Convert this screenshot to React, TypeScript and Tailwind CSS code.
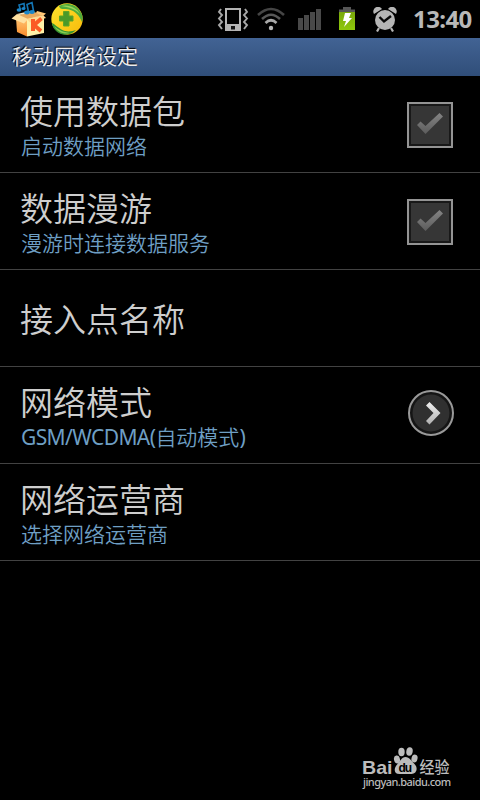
import type { ReactNode } from "react"

type Setting = {
  title: string
  summary?: ReactNode
  control?: "checkbox" | "more"
}

const SETTINGS: Setting[] = [
  { title: "使用数据包", summary: "启动数据网络", control: "checkbox" },
  { title: "数据漫游", summary: "漫游时连接数据服务", control: "checkbox" },
  { title: "接入点名称" },
  {
    title: "网络模式",
    summary: (
      <>
        <span className="font-normal tracking-[-0.6px]">GSM/WCDMA(</span>自动模式
        <span className="font-normal">)</span>
      </>
    ),
    control: "more",
  },
  { title: "网络运营商", summary: "选择网络运营商" },
]

function MusicBoxIcon() {
  return (
    <svg width="38" height="38" viewBox="0 0 38 38" className="shrink-0">
      <defs>
        <linearGradient id="box" x1="0" y1="0" x2="0" y2="1">
          <stop offset="0" stopColor="#ffc573" />
          <stop offset="1" stopColor="#f98b2a" />
        </linearGradient>
      </defs>
      <path d="M7 15 24 12 34 15 17 20Z" fill="#e8a85c" />
      <path d="M6 18 17 20V36.500L7 32Z" fill="url(#box)" />
      <path d="M17 19 34 16V33L17 36.500Z" fill="#fff1a8" />
      <path d="M1.500 18.500 7 14 18 19 14 23.500Z" fill="#ffe0a0" />
      <path d="M7 14 20 11 21 12.500 9 15Z" fill="#ffe9bd" />
      <path d="M17 19 33 15 36 18 20 22.500Z" fill="#ffd892" />
      <path d="M27 11 36 13.500 33 16 26 13Z" fill="#ffc676" />
      <path d="M23 19V31M31.500 18.500 24 25 31 31" stroke="#fb5b25" strokeWidth="4" fill="none" />
      <path
        d="M10.500 10 9 5 14 3.500 14.500 8M18.500 12 17 4.500 22 2.500 23.500 11"
        stroke="#1476b5"
        strokeWidth="1.600"
        fill="none"
      />
      <ellipse cx="9" cy="10" rx="2.400" ry="1.800" fill="#1a85c8" />
      <ellipse cx="13.500" cy="8.500" rx="2" ry="1.600" fill="#1a85c8" />
      <ellipse cx="17" cy="12.500" rx="2.800" ry="1.900" fill="#1a85c8" />
      <ellipse cx="22" cy="12" rx="2.800" ry="1.900" fill="#1a85c8" />
    </svg>
  )
}

function SafeIcon() {
  return (
    <svg width="32" height="32" viewBox="0 0 32 32" className="shrink-0">
      <defs>
        <linearGradient id="safe" x1="0" y1="0" x2="1" y2="1">
          <stop offset="0" stopColor="#ffe52e" />
          <stop offset="1" stopColor="#f7b90a" />
        </linearGradient>
      </defs>
      <circle cx="16" cy="16" r="15.700" fill="url(#safe)" />
      <path d="M8 3C15-1 25 1 29 8C32 12 32 16 31 19C28 12 24 8 18 6.500C13 6 9 7 8 3Z" fill="#4faa3b" />
      <path d="M10 3C18 1 26 5 29 11C24 6 18 4 10 3Z" fill="#9bd65a" />
      <path d="M1 20C5 22 8 26 14 28C18 29 22 28 25 27C20 33 10 33 5 28C3 26 1 23 1 20Z" fill="#349332" />
      <path d="M3 23C8 27 12 29 19 30C13 32 6 29 3 23Z" fill="#8acb50" />
      <path d="M12.500 8.500H18V13H22V18H18V23H12.500V18H8.500V13H12.500Z" fill="#4a9929" stroke="#5fa524" />
    </svg>
  )
}

function VibrateIcon() {
  return (
    <svg width="32" height="26" viewBox="0 0 32 26" className="relative -left-px shrink-0">
      <path d="M8 2H24V25H8Z" fill="#b4b4b4" />
      <path d="M10 4H22V18H10Z" fill="#000" />
      <path d="M14 20H18V23.500H14Z" fill="#111" />
      <path
        d="M4 3 2 6 5 9 2 12.500 5 16 2 19 5 23M28 3 30 6 27 9 30 12.500 27 16 30 19 27 23"
        stroke="#a8a8a8"
        strokeWidth="1.900"
        fill="none"
      />
    </svg>
  )
}

function WifiIcon() {
  return (
    <svg width="28" height="24" viewBox="0 0 28 24" className="shrink-0">
      <path d="M1 8Q14-4 27 8" stroke="#454545" strokeWidth="2.600" fill="none" />
      <path d="M5 12Q14 3.500 23 12" stroke="#585858" strokeWidth="2.600" fill="none" />
      <path d="M8.500 16Q14 10.500 19.500 16" stroke="#a8a8a8" strokeWidth="2.600" fill="none" />
      <circle cx="14" cy="21" r="2.200" fill="#b8b8b8" />
    </svg>
  )
}

function SignalIcon() {
  return (
    <svg width="24" height="22" viewBox="0 0 24 22" className="shrink-0" fill="#494949">
      <path d="M0 10H5V22H0ZM6 7H11V22H6ZM12 4H17V22H12ZM18 1H23V22H18Z" />
    </svg>
  )
}

function BatteryIcon() {
  return (
    <svg width="18" height="24" viewBox="0 0 18 24" className="shrink-0">
      <defs>
        <linearGradient id="battery" x1="0" y1="0" x2="0" y2="1">
          <stop offset="0" stopColor="#79a80b" />
          <stop offset="1" stopColor="#8fc80c" />
        </linearGradient>
      </defs>
      <path d="M5 0H13V2.500H17V6H1V2.500H5Z" fill="#565656" />
      <path d="M1 5H17V23H1Z" fill="url(#battery)" />
      <path d="M7 6H13L11 11H14L6 20 8 14H5Z" fill="#fff" />
    </svg>
  )
}

function AlarmIcon() {
  return (
    <svg width="24" height="25" viewBox="0 0 24 25" className="shrink-0">
      <path d="M1 7A4.600 4.600 0 0 1 9 2ZM23 7A4.600 4.600 0 0 0 15 2Z" fill="#b5b5b5" />
      <path d="M6 21 4 24.500M18 21 20 24.500" stroke="#b5b5b5" strokeWidth="2.200" />
      <circle cx="12" cy="13" r="10" fill="#b5b5b5" />
      <path d="M6.500 10 11 14.500 18 9" stroke="#080808" strokeWidth="2.400" fill="none" />
    </svg>
  )
}

function Checkbox() {
  return (
    <span className="mt-0.5 flex size-[46px] border-2 border-[#949494] bg-[#181818] p-0.5">
      <span className="flex flex-1 items-center justify-center bg-[#363636]">
        <svg width="28" height="24" viewBox="0 0 28 24">
          <defs>
            <linearGradient id="tick" x1="0" y1="0" x2="0" y2="1">
              <stop offset="0" stopColor="#848484" />
              <stop offset="1" stopColor="#5c5c5c" />
            </linearGradient>
          </defs>
          <path d="M1 12 4.500 8.500 9.500 13 23.500 0 27 3.500 9.500 21Z" fill="url(#tick)" />
        </svg>
      </span>
    </span>
  )
}

function MoreButton() {
  return (
    <svg width="46" height="46" viewBox="0 0 46 46" className="-mr-px mb-1">
      <defs>
        <linearGradient id="arrow" x1="0" y1="0" x2="0" y2="1">
          <stop offset="0" stopColor="#f0f0f0" />
          <stop offset="1" stopColor="#b0b0b0" />
        </linearGradient>
      </defs>
      <circle cx="23" cy="23" r="22" fill="#151515" stroke="#999" strokeWidth="2" />
      <circle cx="23" cy="23" r="18.500" fill="#303030" />
      <path d="M18 15.500 21.500 12 32.500 23 21.500 34.500 18 31 25.500 23Z" fill="url(#arrow)" />
    </svg>
  )
}

function Watermark() {
  return (
    <div className="absolute top-[744px] left-[362px] w-[92px] text-[#bcbcbc]">
      <svg
        width="92"
        height="31"
        viewBox="0 0 92 31"
        className="overflow-visible"
        fill="#bcbcbc"
        fontFamily='"Liberation Sans", "Noto Sans CJK SC", sans-serif'
        fontWeight="bold"
      >
        <text x="0" y="29.500" fontSize="19" textLength="30.500" lengthAdjust="spacingAndGlyphs">
          Bai
        </text>
        <ellipse cx="35" cy="15.500" rx="3" ry="4" transform="rotate(-12 35 15.500)" />
        <ellipse cx="39.500" cy="8" rx="3.200" ry="4.200" />
        <ellipse cx="47.500" cy="7.500" rx="3.200" ry="4.200" transform="rotate(10 47.500 7.500)" />
        <ellipse cx="52.500" cy="14.500" rx="3" ry="4" transform="rotate(15 52.500 14.500)" />
        <path d="M43.500 13C47.500 13 49.500 17 52.500 20C56.500 24 54.500 30 49.500 30H37.500C31.500 30 31.500 24 35.500 20C38.500 17 39.500 13 43.500 13Z" />
        <text x="36.500" y="28" fontSize="12" fill="#000" textLength="13.500">
          du
        </text>
        <text x="57.500" y="28.500" fontSize="15.500" fontWeight="500" textLength="30" lengthAdjust="spacingAndGlyphs">
          经验
        </text>
      </svg>
      <p className="ml-px font-['Noto_Sans',sans-serif] text-[11px] leading-[14px] font-medium tracking-[-0.55px] whitespace-nowrap">
        jingyan.baidu.com
      </p>
    </div>
  )
}

export default function App() {
  return (
    <div className="relative h-[800px] w-[480px] overflow-hidden bg-black font-['Noto_Sans','Noto_Sans_CJK_SC',sans-serif]">
      {/* Status bar */}
      <div className="flex h-[38px] items-center pr-2 pl-2.5">
        <MusicBoxIcon />
        <div className="ml-[3px]">
          <SafeIcon />
        </div>
        <div className="ml-auto flex items-center">
          <VibrateIcon />
          <div className="ml-[7px]">
            <WifiIcon />
          </div>
          <div className="ml-[13px]">
            <SignalIcon />
          </div>
          <div className="ml-4">
            <BatteryIcon />
          </div>
          <div className="ml-[17px]">
            <AlarmIcon />
          </div>
          <span className="ml-4 w-[59px] text-[24px] leading-[38px] font-bold tracking-[-0.6px] text-[#b8b8b8]">
            13:40
          </span>
        </div>
      </div>

      <h1 className="h-[38px] bg-linear-to-b from-[#426394] to-[#304e79] pl-3 text-[21px] leading-[36px] font-[350] text-[#eee] [text-shadow:-1px_-1px_1px_#000]">
        移动网络设定
      </h1>

      <ul>
        {SETTINGS.map((item) => (
          <li
            key={item.title}
            className="flex h-[97px] items-center justify-between border-b border-[#424242] pr-[27px] pl-[21px]"
          >
            <div className="pt-1">
              <p className="-ml-px text-[33px] leading-[40px] font-[350] text-[#cecece]">{item.title}</p>
              {item.summary && (
                <p className="text-[21px] leading-[28px] font-[350] text-[#6e9fc4]">{item.summary}</p>
              )}
            </div>
            {item.control === "checkbox" && <Checkbox />}
            {item.control === "more" && <MoreButton />}
          </li>
        ))}
      </ul>

      <Watermark />
    </div>
  )
}
